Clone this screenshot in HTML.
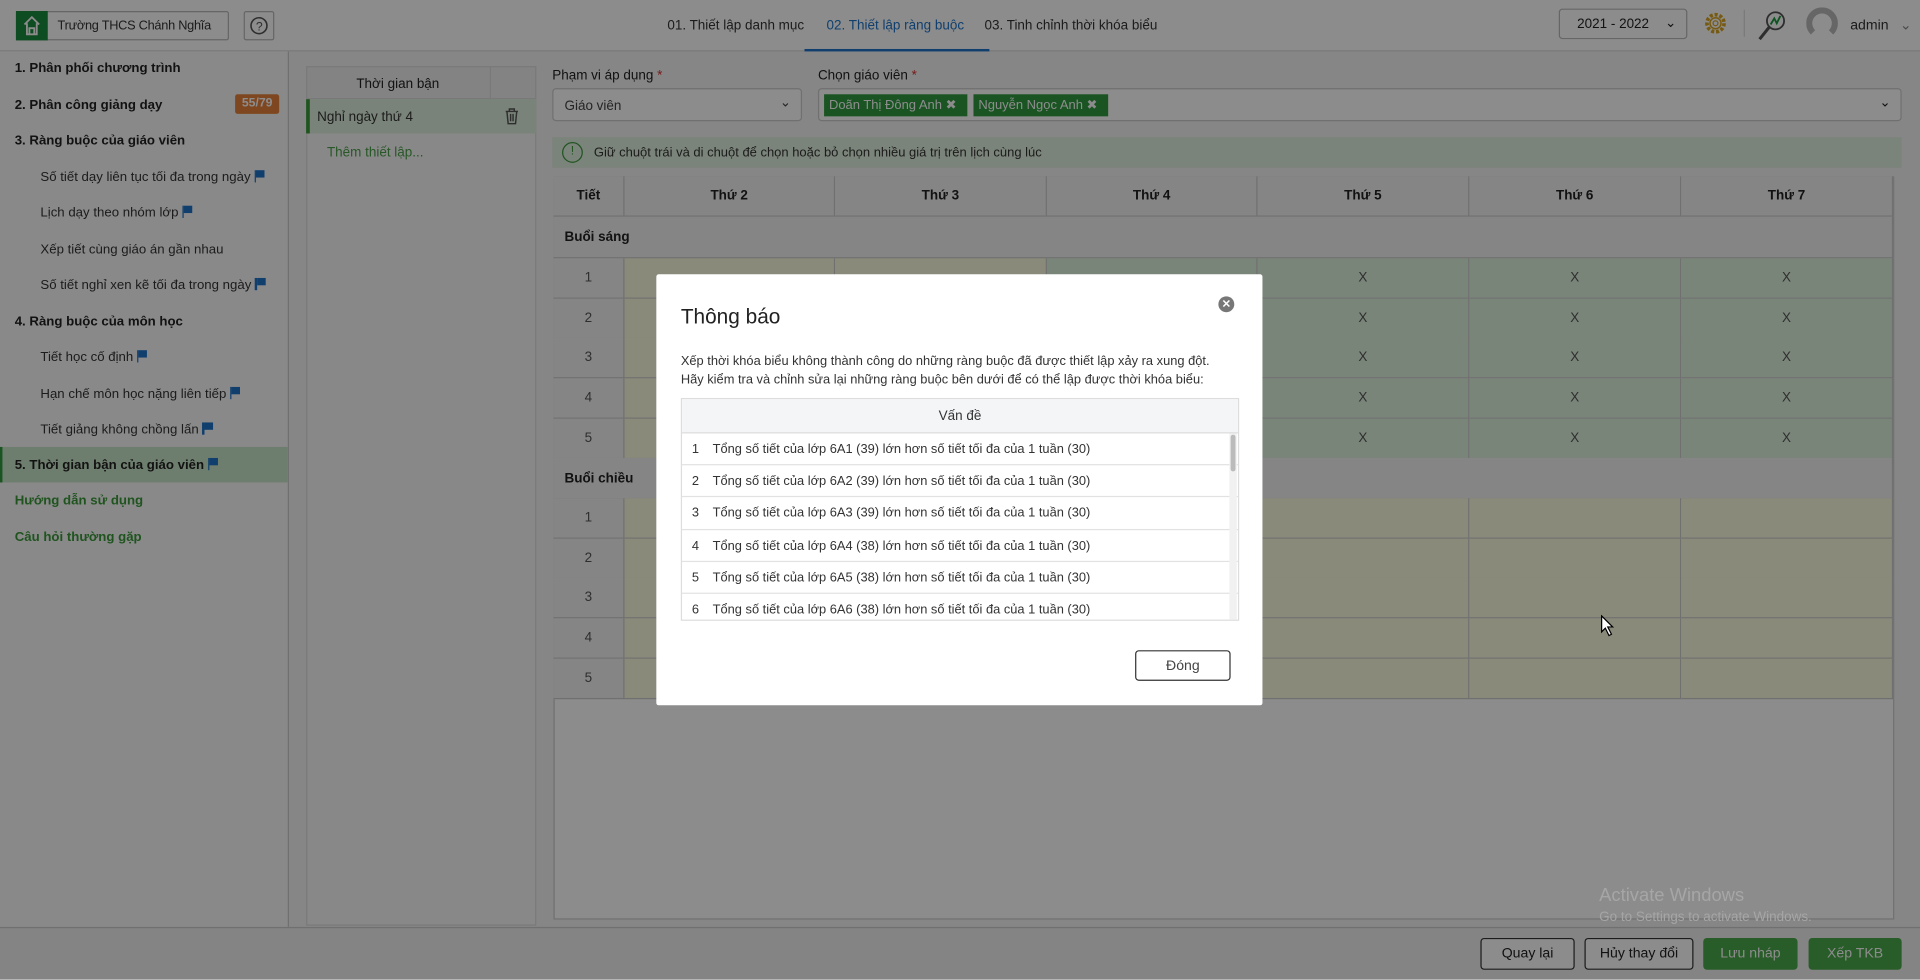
<!DOCTYPE html>
<html><head><meta charset="utf-8">
<style>
*{box-sizing:border-box;margin:0;padding:0}
html,body{width:1920px;height:979px;overflow:hidden;background:#fff}
#root{position:absolute;left:0;top:0;width:1568px;height:800px;transform:scale(1.22449);transform-origin:0 0;font-family:"Liberation Sans",sans-serif;font-size:11px;color:#222;background:#f4f4f4}
.a{position:absolute}
.hdr{left:0;top:0;width:1568px;height:42px;background:#fff;border-bottom:1px solid #ddd}
.tab{top:15px;font-size:11px;color:#333}
.side{left:0;top:42px;width:236px;height:715px;background:#fafafa;border-right:1px solid #ccc}
.si{position:absolute;left:12px;font-size:10.8px;font-weight:bold;color:#222}
.ss{position:absolute;left:33px;font-size:10.8px;color:#333}
.flag{display:inline-block;position:relative;width:9px;height:10px;margin-left:3px;vertical-align:-1px}
.flag:before{content:"";position:absolute;left:0;top:0;width:1.5px;height:10px;background:#1e74c9}
.flag:after{content:"";position:absolute;left:1.5px;top:0;width:7px;height:6px;background:#1e74c9}
.tbl{left:452px;top:144px;width:1095px;height:607px;background:#fff;border:1px solid #ccc}
.cell{position:absolute;border-right:1px solid #ccc;border-bottom:1px solid #ccc;text-align:center;color:#555}
.btn{position:absolute;top:766px;height:26px;border-radius:3px;font-size:11.5px;text-align:center;line-height:24px}
</style></head><body><div id="root">
<div class="a hdr"></div>
<div class="a" style="left:13px;top:9px;width:174px;height:24px;border:1px solid #bbb;border-radius:2px;background:#fff"></div>
<div class="a" style="left:13px;top:9px;width:26px;height:24px;background:#1a8a3c"><svg width="26" height="24"><path d="M7 11 L13 5 L19 11 M9 10 V19 H17 V10 M11 19 V14 H15 V19" stroke="#fff" stroke-width="1.5" fill="none"/></svg></div>
<div class="a" style="left:47px;top:16px;font-size:10.4px;color:#333;letter-spacing:-0.2px">Trường THCS Chánh Nghĩa</div>
<div class="a" style="left:199px;top:9px;width:25px;height:24px;border:1px solid #bbb;border-radius:2px;background:#fff"><svg width="23" height="22"><circle cx="11.5" cy="11" r="6.5" stroke="#555" stroke-width="1.3" fill="none"/><text x="9" y="15" font-size="10" fill="#555" font-family="Liberation Sans">?</text></svg></div>
<div class="a tab" style="left:545px">01. Thiết lập danh mục</div>
<div class="a tab" style="left:675px;color:#1e74c9">02. Thiết lập ràng buộc</div>
<div class="a" style="left:657px;top:40px;width:151px;height:2px;background:#1e74c9"></div>
<div class="a tab" style="left:804px">03. Tinh chỉnh thời khóa biểu</div>
<div class="a" style="left:1273px;top:7px;width:105px;height:25px;border:1px solid #bbb;border-radius:3px;background:#fff;padding:6px 0 0 14px">2021 - 2022<span style="position:absolute;right:8px;top:4px">⌄</span></div>
<svg class="a" style="left:1390px;top:8px" width="22" height="22"><circle cx="11" cy="11" r="7" stroke="#d9a520" stroke-width="3" stroke-dasharray="2.5 1.5" fill="none"/><circle cx="11" cy="11" r="4.5" stroke="#d9a520" stroke-width="1.2" fill="none"/><circle cx="11" cy="11" r="2" stroke="#d9a520" stroke-width="1" fill="none"/></svg>
<div class="a" style="left:1424px;top:8px;width:1px;height:22px;background:#ddd"></div>
<svg class="a" style="left:1433px;top:6px" width="28" height="30"><circle cx="17" cy="11" r="7" stroke="#555" stroke-width="1.5" fill="none"/><path d="M12 16 L4 26" stroke="#555" stroke-width="2.5"/><path d="M13 14 L16 9 L18 13 L21 7" stroke="#1a9a3c" stroke-width="1.5" fill="none"/></svg>
<div class="a" style="left:1475px;top:6px;width:26px;height:26px;border-radius:50%;border:5px solid #bbb;border-bottom-color:transparent"></div>
<div class="a" style="left:1511px;top:13px;font-size:11.5px;color:#333">admin <span style="color:#888;margin-left:6px">⌄</span></div>

<div class="a side"></div>
<div class="si" style="top:50px">1. Phân phối chương trình</div>
<div class="si" style="top:80px">2. Phân công giảng dạy</div>
<div class="a" style="left:192px;top:77px;width:36px;height:16px;background:#e8813a;border-radius:2px;color:#fff;font-weight:bold;text-align:center;line-height:16px;font-size:10px">55/79</div>
<div class="si" style="top:109px">3. Ràng buộc của giáo viên</div>
<div class="ss" style="top:139px">Số tiết dạy liên tục tối đa trong ngày<span class="flag"></span></div>
<div class="ss" style="top:168px">Lịch dạy theo nhóm lớp<span class="flag"></span></div>
<div class="ss" style="top:198px">Xếp tiết cùng giáo án gần nhau</div>
<div class="ss" style="top:227px">Số tiết nghỉ xen kẽ tối đa trong ngày<span class="flag"></span></div>
<div class="si" style="top:257px">4. Ràng buộc của môn học</div>
<div class="ss" style="top:286px">Tiết học cố định<span class="flag"></span></div>
<div class="ss" style="top:316px">Hạn chế môn học nặng liên tiếp<span class="flag"></span></div>
<div class="ss" style="top:345px">Tiết giảng không chồng lấn<span class="flag"></span></div>
<div class="a" style="left:0;top:365px;width:235px;height:29px;background:#c9e6c9;border-left:2px solid #2e9a3e"></div>
<div class="si" style="top:374px">5. Thời gian bận của giáo viên<span class="flag"></span></div>
<div class="si" style="top:403px;color:#3a9a3a">Hướng dẫn sử dụng</div>
<div class="si" style="top:433px;color:#3a9a3a">Câu hỏi thường gặp</div>

<div class="a" style="left:250px;top:54px;width:188px;height:702px;background:#f8f8f8;border:1px solid #ddd"></div>
<div class="a" style="left:250px;top:54px;width:188px;height:27px;background:#efefef;border:1px solid #ddd"></div>
<div class="a" style="left:400px;top:54px;width:1px;height:55px;background:#ddd"></div>
<div class="a" style="left:291px;top:63px;font-size:11px">Thời gian bận</div>
<div class="a" style="left:250px;top:81px;width:188px;height:28px;background:#dcefdc;border-left:3px solid #3a9a3a"></div>
<div class="a" style="left:259px;top:90px;color:#333">Nghỉ ngày thứ 4</div>
<svg class="a" style="left:412px;top:88px" width="12" height="14"><path d="M1 3H11M4 3V1H8V3M2 3L3 13H9L10 3M5 5V11M7 5V11" stroke="#555" stroke-width="1.2" fill="none"/></svg>
<div class="a" style="left:267px;top:119px;color:#4aa04a">Thêm thiết lập...</div>

<div class="a" style="left:451px;top:56px">Phạm vi áp dụng <span style="color:#d33">*</span></div>
<div class="a" style="left:668px;top:56px">Chọn giáo viên <span style="color:#d33">*</span></div>
<div class="a" style="left:451px;top:72px;width:204px;height:27px;background:#fff;border:1px solid #ccc;border-radius:3px;padding:8px 9px;color:#444">Giáo viên<span style="position:absolute;right:8px;top:4px">⌄</span></div>
<div class="a" style="left:668px;top:72px;width:885px;height:27px;background:#fff;border:1px solid #ccc;border-radius:3px"><span style="position:absolute;right:8px;top:4px">⌄</span></div>
<div class="a" style="left:673px;top:77px;width:117px;height:18px;background:#2e9a3e;color:#fff;padding:3px 4px;font-size:10.6px">Doãn Thị Đông Anh ✖</div>
<div class="a" style="left:795px;top:77px;width:110px;height:18px;background:#2e9a3e;color:#fff;padding:3px 4px;font-size:10.6px">Nguyễn Ngọc Anh ✖</div>
<div class="a" style="left:451px;top:112px;width:1102px;height:25px;background:#e0f0de"></div>
<div class="a" style="left:459px;top:116px;width:17px;height:17px;border:1.5px solid #3a9a3a;border-radius:50%;text-align:center;font-size:10px;line-height:14px;color:#3a9a3a">!</div>
<div class="a" style="left:485px;top:119px;color:#333;font-size:10.6px">Giữ chuột trái và di chuột để chọn hoặc bỏ chọn nhiều giá trị trên lịch cùng lúc</div>

<div class="a tbl"></div>
<div id="grid"></div>

<div class="a" style="left:0;top:757px;width:1568px;height:43px;background:#f0f0f0;border-top:1px solid #ccc"></div>
<div class="btn" style="left:1209px;width:77px;border:1px solid #333;background:#fff">Quay lại</div>
<div class="btn" style="left:1294px;width:89px;border:1px solid #333;background:#fff">Hủy thay đổi</div>
<div class="btn" style="left:1391px;width:77px;background:#4aa84a;color:#fff;border:1px solid #4aa84a">Lưu nháp</div>
<div class="btn" style="left:1477px;width:76px;background:#4aa84a;color:#fff;border:1px solid #4aa84a">Xếp TKB</div>

<div class="a" style="left:0;top:0;width:1568px;height:800px;background:rgba(0,0,0,0.45)"></div>
<div class="a" style="left:1306px;top:723px;font-size:15px;color:#a6a6a6">Activate Windows</div>
<div class="a" style="left:1306px;top:743px;font-size:11px;color:#a6a6a6">Go to Settings to activate Windows.</div>
<svg class="a" style="left:1307px;top:502px" width="12" height="18"><path d="M1 1V14L4 11L7 17L9 16L6 10H10Z" fill="#fff" stroke="#000" stroke-width="1"/></svg>

<div class="a" style="left:536px;top:224px;width:495px;height:352px;background:#fff;border-radius:2px"></div>
<div class="a" style="left:556px;top:249px;font-size:17px;color:#222">Thông báo</div>
<div class="a" style="left:995px;top:242px;width:13px;height:13px;border-radius:50%;background:#777;color:#fff;font-size:9px;text-align:center;line-height:13px;font-weight:bold">✕</div>
<div class="a" style="left:556px;top:288px;font-size:10.5px;line-height:14.5px;color:#333;white-space:nowrap">Xếp thời khóa biểu không thành công do những ràng buộc đã được thiết lập xảy ra xung đột.<br>Hãy kiểm tra và chỉnh sửa lại những ràng buộc bên dưới để có thể lập được thời khóa biểu:</div>
<div class="a" style="left:556px;top:325px;width:456px;height:182px;border:1px solid #ddd;overflow:hidden">
<div style="height:28px;background:#f4f5f7;border-bottom:1px solid #ddd;text-align:center;line-height:28px;font-size:11px;color:#333">Vấn đề</div>
<div id="rows"></div>
<div style="position:absolute;right:1px;top:28px;width:6px;height:154px;background:#f1f1f1"></div>
<div style="position:absolute;right:2px;top:29px;width:4px;height:30px;background:#bbb;border-radius:2px"></div>
</div>
<div class="a" style="left:927px;top:531px;width:78px;height:25px;border:1px solid #333;border-radius:3px;text-align:center;line-height:24px;font-size:11.5px;color:#444">Đóng</div>
</div>
<script>
var g='',cols=[452,510,682,855,1027,1200,1373,1546],names=['Tiết','Thứ 2','Thứ 3','Thứ 4','Thứ 5','Thứ 6','Thứ 7'];
for(var i=0;i<7;i++)g+='<div class="cell" style="left:'+cols[i]+'px;top:144px;width:'+(cols[i+1]-cols[i])+'px;height:33px;background:#f2f2f2;line-height:33px;font-weight:bold;color:#222">'+names[i]+'</div>';
function sect(t,y){g+='<div class="cell" style="left:452px;top:'+y+'px;width:1094px;height:34px;background:#f2f2f2;text-align:left;padding-left:9px;line-height:34px;font-weight:bold;color:#222">'+t+'</div>';}
function rows(y0,morning){for(var r=0;r<5;r++){var y=y0+r*32.7;for(var i=0;i<7;i++){var bg=i==0?'#f2f2f2':(morning&&i>=3?'#def2de':'#fbfbe0');var tx=i==0?(r+1):(morning&&i>=4?'X':'');g+='<div class="cell" style="left:'+cols[i]+'px;top:'+y+'px;width:'+(cols[i+1]-cols[i])+'px;height:33px;background:'+bg+';line-height:33px">'+tx+'</div>';}}}
sect('Buổi sáng',177);rows(211,true);sect('Buổi chiều',374);rows(407,false);
document.getElementById('grid').innerHTML=g;
var s='',c=['6A1 (39)','6A2 (39)','6A3 (39)','6A4 (38)','6A5 (38)','6A6 (38)'];
for(var k=0;k<6;k++)s+='<div style="height:26.2px;border-bottom:1px solid #e2e2e2;line-height:26px;font-size:10.5px;color:#333;padding-left:8px"><span style="display:inline-block;width:17px">'+(k+1)+'</span>Tổng số tiết của lớp '+c[k]+' lớn hơn số tiết tối đa của 1 tuần (30)</div>';
document.getElementById('rows').innerHTML=s;
</script>
</body></html>
